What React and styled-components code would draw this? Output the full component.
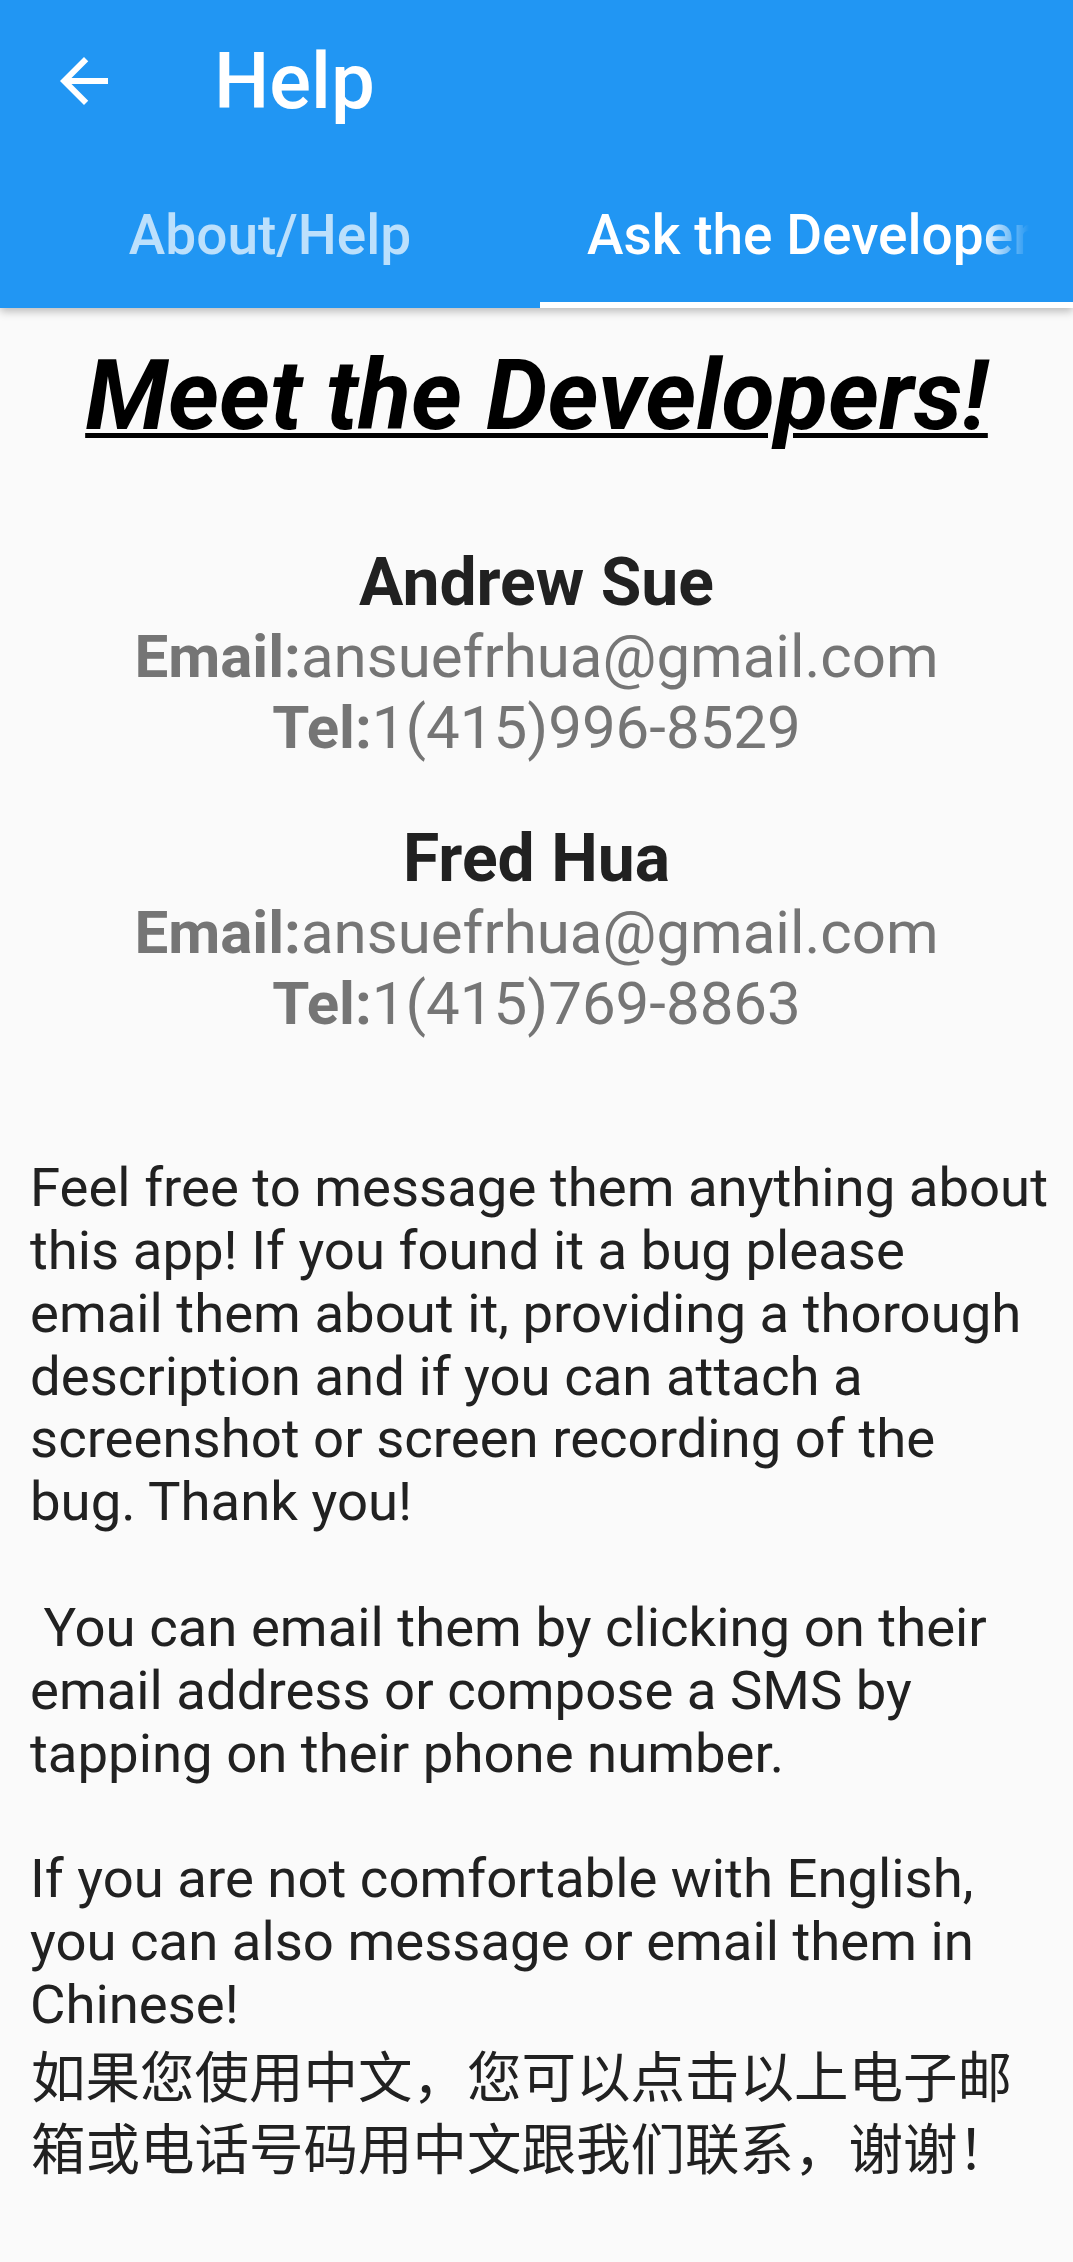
import React from "react";
import styled, { createGlobalStyle } from "styled-components";

const GlobalStyle = createGlobalStyle`
  html, body {
    margin: 0;
    padding: 0;
    background: #fafafa;
  }
  body {
    font-family: Roboto, "Noto Sans CJK SC", sans-serif;
  }
`;

const Screen = styled.div`
  width: 1073px;
  min-height: 2262px;
  background: #fafafa;
  display: flex;
  flex-direction: column;
  overflow: hidden;
`;

const AppBar = styled.header`
  position: relative;
  z-index: 1;
  background: #2196f3;
  box-shadow: 0 3px 9px rgba(0, 0, 0, 0.28);
  display: flex;
  flex-direction: column;
`;

const Toolbar = styled.div`
  height: 162px;
  display: flex;
  align-items: center;
`;

const BackButton = styled.button`
  width: 72px;
  height: 72px;
  margin-left: 48px;
  padding: 0;
  border: 0;
  background: none;
  color: #fff;
  display: flex;
  align-items: center;
  justify-content: center;
`;

const Title = styled.h1`
  margin: 0 0 0 94px;
  font-size: 78px;
  font-weight: 500;
  color: #fff;
  line-height: normal;
`;

const TabRow = styled.nav`
  height: 146px;
  display: flex;
`;

const Tab = styled.div`
  flex: ${(p) => (p.$grow ? "1 1 0" : "0 0 540px")};
  display: flex;
  align-items: center;
  justify-content: ${(p) => (p.$start ? "flex-start" : "center")};
  padding-left: ${(p) => (p.$start ? "47px" : "0")};
  font-size: 55px;
  font-weight: 500;
  color: ${(p) => (p.$active ? "#ffffff" : "rgba(255, 255, 255, 0.7)")};
  box-shadow: ${(p) => (p.$active ? "inset 0 -6px 0 #ffffff" : "none")};
  min-width: 0;
`;

const TabLabel = styled.span`
  display: block;
  white-space: nowrap;
  overflow: hidden;
  max-width: ${(p) => (p.$fade ? "442px" : "none")};
  -webkit-mask-image: ${(p) =>
    p.$fade ? "linear-gradient(to right, #000 calc(100% - 48px), transparent)" : "none"};
  mask-image: ${(p) =>
    p.$fade ? "linear-gradient(to right, #000 calc(100% - 48px), transparent)" : "none"};
`;

const Content = styled.main`
  padding-top: 31px;
  display: flex;
  flex-direction: column;
`;

const Heading = styled.h2`
  margin: 0;
  text-align: center;
  font-size: 97.5px;
  font-weight: 700;
  font-style: italic;
  line-height: normal;
  color: #000;
  text-decoration: underline;
  text-decoration-thickness: 5px;
  text-underline-offset: 4px;
`;

const DeveloperList = styled.section`
  margin-top: 91px;
  display: flex;
  flex-direction: column;
  gap: 57px;
`;

const DevCard = styled.div`
  display: flex;
  flex-direction: column;
  align-items: center;
`;

const DevName = styled.div`
  font-size: 66px;
  font-weight: 700;
  color: #212121;
  line-height: normal;
`;

const ContactLine = styled.div`
  font-size: 60px;
  color: #757575;
  line-height: normal;
`;

const Label = styled.span`
  font-weight: 700;
`;

const Body = styled.p`
  margin: 117px 0 0;
  padding: 0 30px;
  font-size: 54.5px;
  line-height: 62.85px;
  color: #212121;
  white-space: pre;
`;

const ChineseNote = styled.p`
  margin: 6px 0 0;
  padding: 0 28px 0 31px;
  font-size: 54.5px;
  line-height: 72px;
  color: #212121;
`;

const BackArrow = () => (
  <svg width="72" height="72" viewBox="0 0 24 24" fill="currentColor" aria-hidden="true">
    <path d="M20 11H7.83l5.59-5.59L12 4l-8 8 8 8 1.41-1.41L7.83 13H20v-2z" />
  </svg>
);

const developers = [
  { name: "Andrew Sue", email: "ansuefrhua@gmail.com", tel: "1(415)996-8529" },
  { name: "Fred Hua", email: "ansuefrhua@gmail.com", tel: "1(415)769-8863" },
];

const bodyText = [
  "Feel free to message them anything about",
  "this app! If you found it a bug please",
  "email them about it, providing a thorough",
  "description and if you can attach a",
  "screenshot or screen recording of the",
  "bug. Thank you!",
  "",
  " You can email them by clicking on their",
  "email address or compose a SMS by",
  "tapping on their phone number.",
  "",
  "If you are not comfortable with English,",
  "you can also message or email them in",
  "Chinese!",
].join("\n");

export default function App() {
  return (
    <>
      <GlobalStyle />
      <Screen>
        <AppBar>
          <Toolbar>
            <BackButton aria-label="Back">
              <BackArrow />
            </BackButton>
            <Title>Help</Title>
          </Toolbar>
          <TabRow>
            <Tab>
              <TabLabel>About/Help</TabLabel>
            </Tab>
            <Tab $grow $start $active>
              <TabLabel $fade>Ask the Developers</TabLabel>
            </Tab>
          </TabRow>
        </AppBar>
        <Content>
          <Heading>Meet the Developers!</Heading>
          <DeveloperList>
            {developers.map((d) => (
              <DevCard key={d.name}>
                <DevName>{d.name}</DevName>
                <ContactLine>
                  <Label>Email:</Label>
                  {d.email}
                </ContactLine>
                <ContactLine>
                  <Label>Tel:</Label>
                  {d.tel}
                </ContactLine>
              </DevCard>
            ))}
          </DeveloperList>
          <Body>{bodyText}</Body>
          <ChineseNote>
            如果您使用中文，您可以点击以上电子邮箱或电话号码用中文跟我们联系，谢谢！
          </ChineseNote>
        </Content>
      </Screen>
    </>
  );
}
